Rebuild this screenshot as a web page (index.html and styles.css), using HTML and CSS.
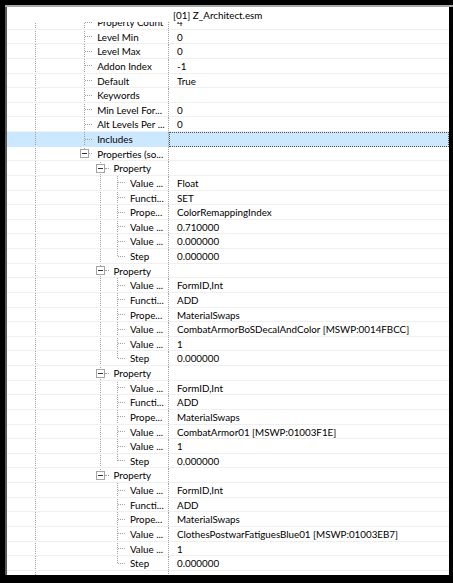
FILE: index.html
```html
<!DOCTYPE html>
<html>
<head>
<meta charset="utf-8">
<link rel="stylesheet" href="styles.css">
</head>
<body>
<div class="window">
  <div class="panel">
    <div class="header">
      <div class="hname"></div>
      <div class="hval">[01] Z_Architect.esm</div>
    </div>
    <div class="tree">
      <div class="row"><div class="name"><span class="g g-v"></span><span class="g"></span><span class="g"></span><span class="g g-t"></span><span class="lbl">Property Count</span></div><div class="val">4</div></div>
      <div class="row"><div class="name"><span class="g g-v"></span><span class="g"></span><span class="g"></span><span class="g g-t"></span><span class="lbl">Level Min</span></div><div class="val">0</div></div>
      <div class="row"><div class="name"><span class="g g-v"></span><span class="g"></span><span class="g"></span><span class="g g-t"></span><span class="lbl">Level Max</span></div><div class="val">0</div></div>
      <div class="row"><div class="name"><span class="g g-v"></span><span class="g"></span><span class="g"></span><span class="g g-t"></span><span class="lbl">Addon Index</span></div><div class="val">-1</div></div>
      <div class="row"><div class="name"><span class="g g-v"></span><span class="g"></span><span class="g"></span><span class="g g-t"></span><span class="lbl">Default</span></div><div class="val">True</div></div>
      <div class="row"><div class="name"><span class="g g-v"></span><span class="g"></span><span class="g"></span><span class="g g-t"></span><span class="lbl">Keywords</span></div><div class="val"></div></div>
      <div class="row"><div class="name"><span class="g g-v"></span><span class="g"></span><span class="g"></span><span class="g g-t"></span><span class="lbl">Min Level For...</span></div><div class="val">0</div></div>
      <div class="row"><div class="name"><span class="g g-v"></span><span class="g"></span><span class="g"></span><span class="g g-t"></span><span class="lbl">Alt Levels Per ...</span></div><div class="val">0</div></div>
      <div class="row selected"><div class="name"><span class="g g-v"></span><span class="g"></span><span class="g"></span><span class="g g-t"></span><span class="lbl">Includes</span></div><div class="val focus"></div></div>
      <div class="row"><div class="name"><span class="g g-v"></span><span class="g"></span><span class="g"></span><span class="g g-x up"><i class="box"></i></span><span class="lbl">Properties (so...</span></div><div class="val"></div></div>

      <div class="row"><div class="name"><span class="g g-v"></span><span class="g"></span><span class="g"></span><span class="g"></span><span class="g g-x up down"><i class="box"></i></span><span class="lbl">Property</span></div><div class="val"></div></div>
      <div class="row"><div class="name"><span class="g g-v"></span><span class="g"></span><span class="g"></span><span class="g"></span><span class="g g-v"></span><span class="g g-t"></span><span class="lbl">Value ...</span></div><div class="val">Float</div></div>
      <div class="row"><div class="name"><span class="g g-v"></span><span class="g"></span><span class="g"></span><span class="g"></span><span class="g g-v"></span><span class="g g-t"></span><span class="lbl">Functi...</span></div><div class="val">SET</div></div>
      <div class="row"><div class="name"><span class="g g-v"></span><span class="g"></span><span class="g"></span><span class="g"></span><span class="g g-v"></span><span class="g g-t"></span><span class="lbl">Prope...</span></div><div class="val">ColorRemappingIndex</div></div>
      <div class="row"><div class="name"><span class="g g-v"></span><span class="g"></span><span class="g"></span><span class="g"></span><span class="g g-v"></span><span class="g g-t"></span><span class="lbl">Value ...</span></div><div class="val">0.710000</div></div>
      <div class="row"><div class="name"><span class="g g-v"></span><span class="g"></span><span class="g"></span><span class="g"></span><span class="g g-v"></span><span class="g g-t"></span><span class="lbl">Value ...</span></div><div class="val">0.000000</div></div>
      <div class="row"><div class="name"><span class="g g-v"></span><span class="g"></span><span class="g"></span><span class="g"></span><span class="g g-v"></span><span class="g g-l"></span><span class="lbl">Step</span></div><div class="val">0.000000</div></div>

      <div class="row"><div class="name"><span class="g g-v"></span><span class="g"></span><span class="g"></span><span class="g"></span><span class="g g-x up down"><i class="box"></i></span><span class="lbl">Property</span></div><div class="val"></div></div>
      <div class="row"><div class="name"><span class="g g-v"></span><span class="g"></span><span class="g"></span><span class="g"></span><span class="g g-v"></span><span class="g g-t"></span><span class="lbl">Value ...</span></div><div class="val">FormID,Int</div></div>
      <div class="row"><div class="name"><span class="g g-v"></span><span class="g"></span><span class="g"></span><span class="g"></span><span class="g g-v"></span><span class="g g-t"></span><span class="lbl">Functi...</span></div><div class="val">ADD</div></div>
      <div class="row"><div class="name"><span class="g g-v"></span><span class="g"></span><span class="g"></span><span class="g"></span><span class="g g-v"></span><span class="g g-t"></span><span class="lbl">Prope...</span></div><div class="val">MaterialSwaps</div></div>
      <div class="row"><div class="name"><span class="g g-v"></span><span class="g"></span><span class="g"></span><span class="g"></span><span class="g g-v"></span><span class="g g-t"></span><span class="lbl">Value ...</span></div><div class="val">CombatArmorBoSDecalAndColor [MSWP:0014FBCC]</div></div>
      <div class="row"><div class="name"><span class="g g-v"></span><span class="g"></span><span class="g"></span><span class="g"></span><span class="g g-v"></span><span class="g g-t"></span><span class="lbl">Value ...</span></div><div class="val">1</div></div>
      <div class="row"><div class="name"><span class="g g-v"></span><span class="g"></span><span class="g"></span><span class="g"></span><span class="g g-v"></span><span class="g g-l"></span><span class="lbl">Step</span></div><div class="val">0.000000</div></div>

      <div class="row"><div class="name"><span class="g g-v"></span><span class="g"></span><span class="g"></span><span class="g"></span><span class="g g-x up down"><i class="box"></i></span><span class="lbl">Property</span></div><div class="val"></div></div>
      <div class="row"><div class="name"><span class="g g-v"></span><span class="g"></span><span class="g"></span><span class="g"></span><span class="g g-v"></span><span class="g g-t"></span><span class="lbl">Value ...</span></div><div class="val">FormID,Int</div></div>
      <div class="row"><div class="name"><span class="g g-v"></span><span class="g"></span><span class="g"></span><span class="g"></span><span class="g g-v"></span><span class="g g-t"></span><span class="lbl">Functi...</span></div><div class="val">ADD</div></div>
      <div class="row"><div class="name"><span class="g g-v"></span><span class="g"></span><span class="g"></span><span class="g"></span><span class="g g-v"></span><span class="g g-t"></span><span class="lbl">Prope...</span></div><div class="val">MaterialSwaps</div></div>
      <div class="row"><div class="name"><span class="g g-v"></span><span class="g"></span><span class="g"></span><span class="g"></span><span class="g g-v"></span><span class="g g-t"></span><span class="lbl">Value ...</span></div><div class="val">CombatArmor01 [MSWP:01003F1E]</div></div>
      <div class="row"><div class="name"><span class="g g-v"></span><span class="g"></span><span class="g"></span><span class="g"></span><span class="g g-v"></span><span class="g g-t"></span><span class="lbl">Value ...</span></div><div class="val">1</div></div>
      <div class="row"><div class="name"><span class="g g-v"></span><span class="g"></span><span class="g"></span><span class="g"></span><span class="g g-v"></span><span class="g g-l"></span><span class="lbl">Step</span></div><div class="val">0.000000</div></div>

      <div class="row"><div class="name"><span class="g g-v"></span><span class="g"></span><span class="g"></span><span class="g"></span><span class="g g-x up"><i class="box"></i></span><span class="lbl">Property</span></div><div class="val"></div></div>
      <div class="row"><div class="name"><span class="g g-v"></span><span class="g"></span><span class="g"></span><span class="g"></span><span class="g"></span><span class="g g-t"></span><span class="lbl">Value ...</span></div><div class="val">FormID,Int</div></div>
      <div class="row"><div class="name"><span class="g g-v"></span><span class="g"></span><span class="g"></span><span class="g"></span><span class="g"></span><span class="g g-t"></span><span class="lbl">Functi...</span></div><div class="val">ADD</div></div>
      <div class="row"><div class="name"><span class="g g-v"></span><span class="g"></span><span class="g"></span><span class="g"></span><span class="g"></span><span class="g g-t"></span><span class="lbl">Prope...</span></div><div class="val">MaterialSwaps</div></div>
      <div class="row"><div class="name"><span class="g g-v"></span><span class="g"></span><span class="g"></span><span class="g"></span><span class="g"></span><span class="g g-t"></span><span class="lbl">Value ...</span></div><div class="val">ClothesPostwarFatiguesBlue01 [MSWP:01003EB7]</div></div>
      <div class="row"><div class="name"><span class="g g-v"></span><span class="g"></span><span class="g"></span><span class="g"></span><span class="g"></span><span class="g g-t"></span><span class="lbl">Value ...</span></div><div class="val">1</div></div>
      <div class="row"><div class="name"><span class="g g-v"></span><span class="g"></span><span class="g"></span><span class="g"></span><span class="g"></span><span class="g g-l"></span><span class="lbl">Step</span></div><div class="val">0.000000</div></div>

      <div class="row"><div class="name"><span class="g g-t"></span><span class="lbl">STOP - Marker</span></div><div class="val"></div></div>
    </div>
  </div>
</div>
</body>
</html>
```

FILE: styles.css
```css
html, body {
  margin: 0;
  padding: 0;
  background: #000;
  width: 453px;
  height: 583px;
  overflow: hidden;
}

.window {
  margin: 5px 0 0 5px;
  border-top: 2px solid #a9a9a9;
}

.panel {
  width: 442px;
  height: 568px;
  background: #fff;
  border-left: 2px solid #5a5a5a;
  overflow: hidden;
  font-family: Lato, "Noto Sans", sans-serif;
  font-size: 9.8px;
  color: #000;
}

.header {
  position: relative;
  z-index: 2;
  display: flex;
  height: 15px;
  background: #fff;
  line-height: 16px;
}

.hname {
  width: 162px;
  flex: none;
}

.hval {
  padding-left: 4px;
  white-space: nowrap;
}

.tree {
  margin-top: -6.9px;
}

.row {
  display: flex;
  height: 14.64px;
  box-sizing: border-box;
  border-bottom: 1px solid #efefef;
  line-height: 14px;
}

.row.selected {
  background: #cce8ff;
  border-bottom-color: #cce8ff;
}

.name {
  width: 162px;
  flex: none;
  display: flex;
  box-sizing: border-box;
  padding-left: 19.8px;
  border-right: 1px dotted #a0a0a0;
  overflow: hidden;
  white-space: nowrap;
}

.val {
  flex: 1;
  padding-left: 8px;
  white-space: nowrap;
  overflow: hidden;
  box-sizing: border-box;
}

.val.focus {
  border: 1px dotted #505050;
  margin-bottom: -1px;
}

.lbl {
  padding-left: 4.8px;
}

.g {
  position: relative;
  width: 16.4px;
  flex: none;
}

.g-v::before,
.g-t::before,
.g-l::before {
  content: "";
  position: absolute;
  left: 8px;
  top: -1px;
  bottom: -1px;
  border-left: 1px dotted #a0a0a0;
}

.g-l::before {
  bottom: auto;
  height: 8px;
}

.g-t::after,
.g-l::after,
.g-x::after {
  content: "";
  position: absolute;
  left: 9px;
  right: 0;
  top: 6.5px;
  border-top: 1px dotted #a0a0a0;
}

.g-x::after {
  left: 13px;
}

.g-x.up::before {
  content: "";
  position: absolute;
  left: 8px;
  top: -1px;
  height: 3px;
  border-left: 1px dotted #a0a0a0;
}

.g-x.down .box::after {
  content: "";
  position: absolute;
  left: 3px;
  top: 9px;
  height: 5px;
  border-left: 1px dotted #a0a0a0;
}

.box {
  position: absolute;
  left: 4px;
  top: 2.5px;
  width: 9px;
  height: 9px;
  box-sizing: border-box;
  border: 1px solid #a4a4a4;
  background: #fff;
}

.box::before {
  content: "";
  position: absolute;
  left: 1px;
  top: 3px;
  width: 5px;
  height: 1px;
  background: #333;
}
```
